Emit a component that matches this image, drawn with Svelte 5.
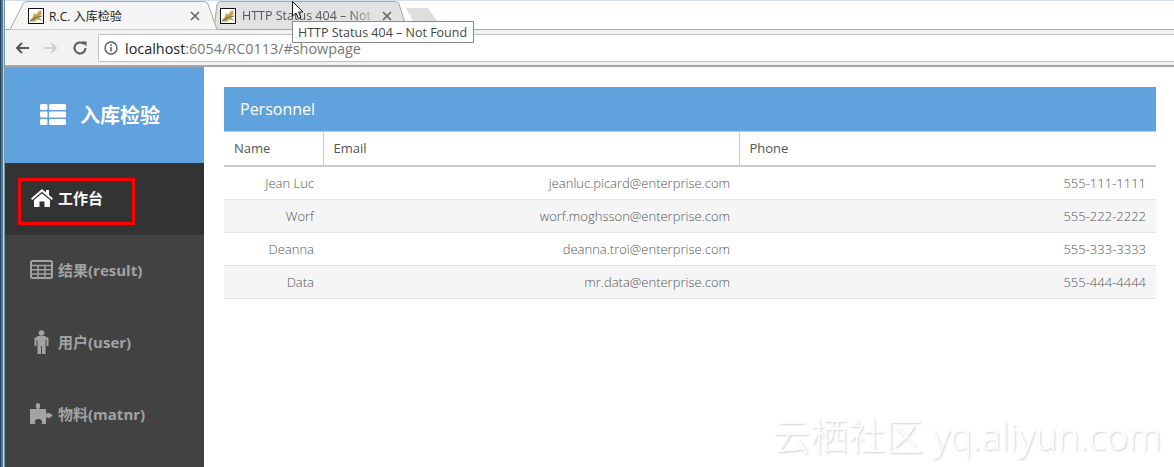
<script>
  const people = [
    { name: 'Jean Luc', email: 'jeanluc.picard@enterprise.com', phone: '555-111-1111' },
    { name: 'Worf', email: 'worf.moghsson@enterprise.com', phone: '555-222-2222' },
    { name: 'Deanna', email: 'deanna.troi@enterprise.com', phone: '555-333-3333' },
    { name: 'Data', email: 'mr.data@enterprise.com', phone: '555-444-4444' },
  ];

  const nav = [
    { key: 'home', label: '工作台', active: true },
    { key: 'table', label: '结果(result)' },
    { key: 'male', label: '用户(user)' },
    { key: 'puzzle', label: '物料(matnr)' },
  ];
</script>

{#snippet favicon()}
  <svg class="fav" viewBox="0 0 16 16" width="16" height="16">
    <rect x="0.5" y="0.5" width="15" height="15" fill="#fff" stroke="#111" />
    <path d="M1.5 12.5 L5 8.5 L5.5 5 L8 6.5 L11 3 L13.5 2.5 L13.5 6 L11 9 L14.5 13 L10 11.5 L6 14Z" fill="#c9a25a" />
    <path d="M2 13.5 L8 9.5 L14 8" stroke="#6b6256" fill="none" />
  </svg>
{/snippet}

{#snippet closeIcon()}
  <svg class="close" viewBox="0 0 10 10" width="10" height="10">
    <path d="M1 1 L9 9 M9 1 L1 9" stroke="#666" stroke-width="1.7" />
  </svg>
{/snippet}

<div class="window">
  <div class="edge"></div>
  <div class="browser">
    <div class="tabstrip">
      <div class="tab active">
        <svg class="tabshape" viewBox="0 0 214 30" width="214" height="30">
          <path d="M0 29.5 L13 4 Q14 1.5 17 1.5 L194 1.5 Q197 1.5 198 4 L207 29.5" fill="#f5f5f5" stroke="#a9a9a9" />
        </svg>
        {@render favicon()}
        <span class="tabtitle">R.C. 入库检验</span>
        {@render closeIcon()}
      </div>
      <div class="tab inactive">
        <svg class="tabshape" viewBox="0 0 196 30" width="196" height="30">
          <path d="M1 29 L4 4 Q5 1.5 8 1.5 L182 1.5 Q185 1.5 186 4 L194 29" fill="#e2e2e2" stroke="#a9a9a9" />
        </svg>
        {@render favicon()}
        <span class="tabtitle">HTTP Status 404 – Not</span>
        {@render closeIcon()}
      </div>
      <svg class="newtab" viewBox="0 0 32 13" width="32" height="13">
        <path d="M0 0 L22 0 L31 13 L7 13Z" fill="#dedede" />
      </svg>
    </div>

    <div class="toolbar">
      <svg viewBox="0 0 16 16" width="16" height="16" class="navicon">
        <path d="M15 8 H3 M8 3 L3 8 L8 13" fill="none" stroke="#5a5a5a" stroke-width="2" />
      </svg>
      <svg viewBox="0 0 16 16" width="16" height="16" class="navicon">
        <path d="M1 8 H13 M8 3 L13 8 L8 13" fill="none" stroke="#cfcfcf" stroke-width="2" />
      </svg>
      <svg viewBox="0 0 16 16" width="16" height="16" class="navicon">
        <path d="M13.5 8 A5.5 5.5 0 1 1 11.8 4" fill="none" stroke="#5a5a5a" stroke-width="2" />
        <path d="M9.5 1.5 H14.5 V6.5Z" fill="#5a5a5a" />
      </svg>
      <div class="omnibox">
        <svg viewBox="0 0 14 14" width="14" height="14">
          <circle cx="7" cy="7" r="6" fill="none" stroke="#5a5a5a" stroke-width="1.4" />
          <path d="M7 6 V10.5 M7 3.3 V5" stroke="#5a5a5a" stroke-width="1.5" />
        </svg>
        <span class="url"><b>localhost</b>:6054/RC0113/#showpage</span>
      </div>
    </div>

    <div class="page">
      <aside class="sidebar">
        <div class="brand">
          <svg viewBox="0 0 26 21" width="26" height="21">
            <g fill="#fff">
              <rect x="0" y="0" width="7.5" height="6" rx="1.5" />
              <rect x="9" y="0" width="17" height="6" rx="1.5" />
              <rect x="0" y="7.5" width="7.5" height="6" rx="1" />
              <rect x="9" y="7.5" width="17" height="6" rx="1" />
              <rect x="0" y="15" width="7.5" height="6" rx="1.5" />
              <rect x="9" y="15" width="17" height="6" rx="1.5" />
            </g>
          </svg>
          <span>入库检验</span>
        </div>
        <nav>
          {#each nav as item}
            <div class="navrow" class:active={item.active}>
              <span class="navicon-box">
                {#if item.key === 'home'}
                  <svg viewBox="0 0 22 18" width="22" height="18">
                    <path fill="#fff" d="M11 0 L15 3.4 V1 H18 V6 L22 9.5 L20.8 11 L11 2.8 L1.2 11 L0 9.5Z" />
                    <path fill="#fff" d="M11 4.5 L19 11 V18 H13.5 V12.5 H8.5 V18 H3 V11Z" />
                  </svg>
                {:else if item.key === 'table'}
                  <svg class="lift" viewBox="0 0 23 19" width="23" height="19">
                    <rect x="1" y="1" width="21" height="17" rx="1.5" fill="none" stroke="#a3a3a3" stroke-width="2" />
                    <path d="M1 5.5 H22 M1 9.8 H22 M1 14 H22 M8 5 V18 M15 5 V18" stroke="#a3a3a3" stroke-width="1.5" />
                  </svg>
                {:else if item.key === 'male'}
                  <svg viewBox="0 0 15 24" width="15" height="24">
                    <circle cx="7.5" cy="3" r="2.8" fill="#a3a3a3" />
                    <path fill="#a3a3a3" d="M3 7 Q3 6 4.5 6 H10.5 Q12 6 12 7 L14.5 8 V16 H12.5 V10 H11.5 V24 H8 V16 H7 V24 H3.5 V10 H2.5 V16 H0.5 V8Z" />
                  </svg>
                {:else}
                  <svg class="lift" viewBox="0 0 23 22" width="23" height="22">
                    <path fill="#a3a3a3" d="M0 7 H7 C5.5 5 5 1.5 8 1 C11 1.5 10.5 5 9 7 H16 V12 C18 10.5 20 10.5 22.5 13.5 C20 16.5 18 16.5 16 15 V22 H11.5 C13 19.5 11.5 17 8.5 17 C5.5 17 4 19.5 5.5 22 H0Z" />
                  </svg>
                {/if}
              </span>
              <span class="navlabel">{item.label}</span>
            </div>
          {/each}
        </nav>
      </aside>

      <main class="content">
        <div class="panel-title">Personnel</div>
        <table>
          <thead>
            <tr><th class="c1">Name</th><th class="c2">Email</th><th>Phone</th></tr>
          </thead>
          <tbody>
            {#each people as p}
              <tr><td>{p.name}</td><td>{p.email}</td><td>{p.phone}</td></tr>
            {/each}
          </tbody>
        </table>
      </main>
    </div>
  </div>

  <div class="highlight"></div>
  <div class="tooltip">HTTP Status 404 – Not Found</div>
  <svg class="cursor" viewBox="0 0 12 19" width="12" height="19">
    <path d="M0.5 0.5 V15 L4 12 L6.5 17.5 L9 16.5 L6.5 11 H11Z" fill="#fff" stroke="#111" />
  </svg>
  <div class="watermark">云栖社区 yq.aliyun.com</div>
</div>

<style>
  :global(body) {
    margin: 0;
    background: #fff;
  }

  .window {
    position: relative;
    display: flex;
    width: 1174px;
    height: 467px;
    overflow: hidden;
    font-family: 'Open Sans', 'Noto Sans CJK SC', sans-serif;
  }

  .edge {
    width: 5px;
    flex: none;
    background: linear-gradient(90deg, #3c3f42 0 1px, #1f86dc 1px 3px, #d6d6d6 3px 4px, #8f8f8f 4px);
  }

  .browser {
    flex: 1;
    display: flex;
    flex-direction: column;
    min-width: 0;
  }

  /* tab strip */
  .tabstrip {
    height: 30px;
    flex: none;
    display: flex;
    background: #fff;
    border-top: 1px solid #d6e0f2;
    border-bottom: 1px solid #a8a8a8;
    box-sizing: border-box;
    padding-left: 5px;
  }

  .tab {
    position: relative;
    display: flex;
    align-items: center;
    height: 29px;
    font-size: 12.5px;
    color: #222;
  }

  .tab.active {
    width: 203px;
    padding-left: 18px;
    box-sizing: border-box;
    z-index: 2;
  }

  .tab.active .tabtitle {
    font-size: 12.1px;
    margin-left: -1px;
  }

  .tab.inactive {
    width: 196px;
    padding-left: 7px;
    box-sizing: border-box;
    color: #555;
  }

  .tabshape {
    position: absolute;
    left: 0;
    top: -1px;
  }

  .fav {
    position: relative;
    flex: none;
    margin-right: 6px;
  }

  .tabtitle {
    position: relative;
    flex: 1;
    min-width: 0;
    white-space: nowrap;
  }

  .inactive .tabtitle {
    mask-image: linear-gradient(90deg, #000 76%, rgba(0, 0, 0, 0.3) 93%);
  }

  .close {
    position: relative;
    flex: none;
    margin-right: 13px;
  }

  .inactive .close {
    margin-right: 17px;
  }

  .newtab {
    margin: 7px 0 0 -3px;
  }

  /* toolbar */
  .toolbar {
    height: 37px;
    flex: none;
    display: flex;
    align-items: flex-start;
    gap: 13px;
    padding: 4px 0 0 9px;
    box-sizing: border-box;
    background: #f2f2f2;
    border-bottom: 2px solid #a8a8a8;
  }

  .navicon {
    margin-top: 6px;
  }

  .omnibox {
    flex: 1;
    height: 28px;
    display: flex;
    align-items: center;
    gap: 7px;
    padding-left: 5px;
    margin: 0 -4px 0 -3px;
    box-sizing: border-box;
    background: #fff;
    border: 1px solid #bdbdbd;
    border-radius: 2px;
  }

  .url {
    font-size: 14.4px;
    color: #777;
    white-space: nowrap;
  }

  .url b {
    font-weight: 400;
    color: #222;
  }

  /* page */
  .page {
    flex: 1;
    display: flex;
    min-height: 0;
  }

  .sidebar {
    width: 199px;
    flex: none;
    background: #424242;
  }

  .brand {
    height: 96px;
    display: flex;
    align-items: center;
    gap: 14px;
    padding: 0 0 2px 35px;
    box-sizing: border-box;
    background: #5fa2dd;
    color: #fff;
    font-size: 20px;
    font-weight: 700;
  }

  .navrow {
    height: 72px;
    display: flex;
    align-items: center;
    padding: 0 0 2px 25px;
    box-sizing: border-box;
    color: #a3a3a3;
    font-size: 15px;
    font-weight: 700;
  }

  .navlabel {
    margin-bottom: 2px;
  }

  .navrow.active {
    background: #333;
    color: #fff;
  }

  .navicon-box {
    width: 23px;
    display: flex;
    justify-content: center;
    margin-right: 5px;
  }

  .lift {
    margin-bottom: 2px;
  }

  .content {
    flex: 1;
    padding: 20px 18px 0 20px;
    min-width: 0;
  }

  .panel-title {
    height: 44px;
    display: flex;
    align-items: center;
    padding-left: 16px;
    background: #5fa2dd;
    color: #fff;
    font-size: 16px;
  }

  table {
    width: 100%;
    border-collapse: collapse;
    table-layout: fixed;
    font-size: 13px;
    color: #555;
  }

  th {
    height: 34px;
    padding: 0 10px;
    text-align: left;
    font-weight: 400;
    border-top: 1px solid #ccc;
    border-bottom: 2px solid #ccc;
    box-sizing: border-box;
  }

  th.c1 {
    width: 99px;
    border-right: 1px solid #ccc;
  }

  th.c2 {
    width: 416px;
    border-right: 1px solid #ccc;
  }

  td {
    height: 33px;
    padding: 0 9px 0 10px;
    text-align: right;
    font-weight: 300;
    border-bottom: 1px solid #e2e2e2;
    box-sizing: border-box;
  }

  td:last-child {
    padding-right: 10px;
  }

  tbody tr:first-child td {
    height: 34px;
  }

  tbody tr:nth-child(even) {
    background: #f5f5f5;
  }

  .highlight {
    position: absolute;
    left: 18px;
    top: 178px;
    width: 117px;
    height: 47px;
    border: 3px solid #f00;
    box-sizing: border-box;
  }

  .tooltip {
    position: absolute;
    left: 292px;
    top: 21px;
    height: 22px;
    padding: 0 6px 0 5px;
    display: flex;
    align-items: center;
    background: #fff;
    border: 1px solid #8a8a8a;
    box-sizing: border-box;
    font-size: 12.5px;
    color: #444;
    white-space: nowrap;
    z-index: 3;
  }

  .cursor {
    position: absolute;
    left: 292px;
    top: 1px;
    z-index: 4;
  }

  .watermark {
    position: absolute;
    left: 773px;
    top: 411px;
    font-size: 37.5px;
    line-height: 50px;
    font-weight: 300;
    color: #fff;
    text-shadow: 1px 1px 2px rgba(0, 0, 0, 0.2);
    white-space: nowrap;
  }
</style>
